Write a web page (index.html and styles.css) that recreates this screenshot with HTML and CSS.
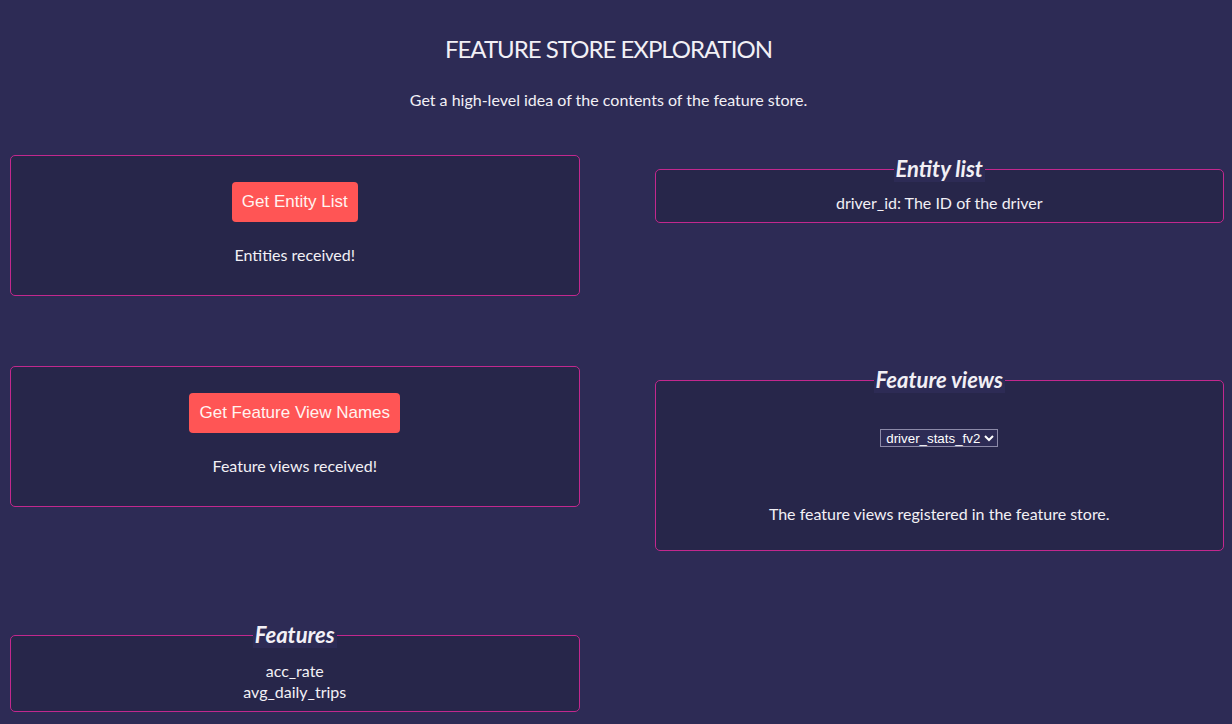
FILE: index.html
```html
<!DOCTYPE html>
<html>
<head>
<meta charset="utf-8">
<title>Feature Store Exploration</title>
<link rel="stylesheet" href="styles.css">
</head>
<body>
<div class="page">
  <header class="header">
    <h1 class="title">FEATURE STORE EXPLORATION</h1>
    <p class="subtitle">Get a high-level idea of the contents of the feature store.</p>
  </header>
  <main class="grid">
    <div class="row row-1">
      <div class="card">
        <button class="btn">Get Entity List</button>
        <p class="status">Entities received!</p>
      </div>
      <fieldset class="panel panel-entity">
        <legend class="legend">Entity list</legend>
        <p class="line">driver_id: The ID of the driver</p>
      </fieldset>
    </div>
    <div class="row row-2">
      <div class="card">
        <button class="btn">Get Feature View Names</button>
        <p class="status">Feature views received!</p>
      </div>
      <fieldset class="panel panel-views">
        <legend class="legend">Feature views</legend>
        <div class="select-wrap">
          <select class="select">
            <option>driver_stats_fv2</option>
          </select>
        </div>
        <p class="line desc">The feature views registered in the feature store.</p>
      </fieldset>
    </div>
    <div class="row row-3">
      <fieldset class="panel panel-features">
        <legend class="legend">Features</legend>
        <p class="line">acc_rate</p>
        <p class="line">avg_daily_trips</p>
      </fieldset>
      <div></div>
    </div>
  </main>
</div>
</body>
</html>
```

FILE: styles.css
```css
html, body {
  margin: 0;
  padding: 0;
  background: #2d2b55;
}
body {
  font-family: Lato, "Open Sans", sans-serif;
  color: #f2f0f5;
  font-size: 16px;
}
.page {
  padding: 0 8px 0 10px;
}
.header {
  text-align: center;
  padding-top: 33px;
  margin-right: 17px;
}
.title {
  margin: 0;
  font-size: 24px;
  line-height: 32px;
  font-weight: 400;
  letter-spacing: -1px;
}
.subtitle {
  margin: 24px 0 0;
  font-size: 16px;
  line-height: 21px;
}
.grid {
  margin-top: 45px;
  display: flex;
  flex-direction: column;
  gap: 70px;
}
.row {
  display: grid;
  grid-template-columns: 1fr 1fr;
  column-gap: 75px;
  align-items: start;
}
.card {
  background: #27264a;
  border: 1px solid #c2288e;
  border-radius: 5px;
  text-align: center;
  padding: 26px 0 30px;
}
.btn {
  font-family: "Liberation Sans", Arial, sans-serif;
  font-size: 17px;
  height: 40px;
  padding: 0 10px;
  background: #ff5555;
  color: #fff3f0;
  border: none;
  border-radius: 4px;
}
.status {
  margin: 22px 0 0;
  line-height: 21px;
}
.panel {
  margin: 1px 0 0;
  background: #27264a;
  border: 1px solid #c2288e;
  border-radius: 5px;
  text-align: center;
  padding: 0 10px 9px;
  min-width: 0;
}
.legend {
  margin: 0 auto;
  padding: 0 2px;
  font-size: 22px;
  line-height: 26px;
  font-weight: 700;
  font-style: italic;
  background: #2d2b55;
}
.line {
  margin: 0;
  line-height: 21px;
}
.panel-entity .line {
  margin-top: 10px;
}
.panel-views {
  padding-bottom: 26px;
}
.select-wrap {
  margin-top: 34px;
  height: 18px;
}
.select {
  font-family: "Liberation Sans", Arial, sans-serif;
  font-size: 13.33px;
  background: #2d2b55;
  color: #ffffff;
  border: 1px solid #8c8aa8;
  border-radius: 0;
  height: 18px;
  padding: 0 0 0 1px;
}
.desc {
  margin-top: 58px;
}
.panel-features {
  padding-bottom: 9px;
}
.panel-features .line:first-of-type {
  margin-top: 12px;
}
```
